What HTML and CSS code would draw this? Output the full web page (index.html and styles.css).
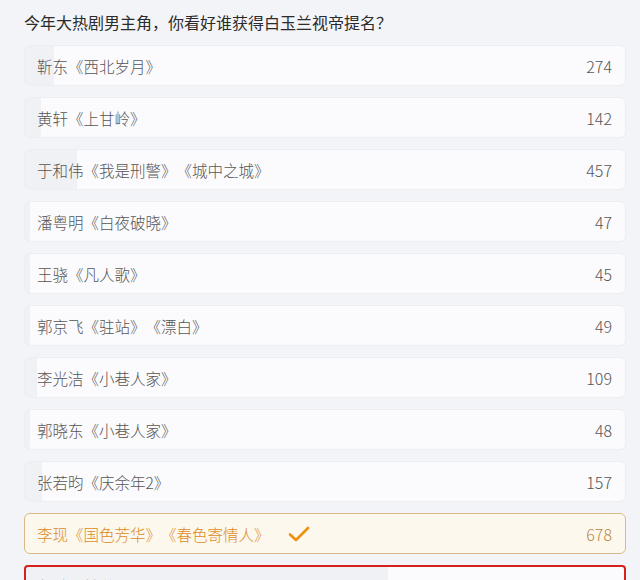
FILE: index.html
```html
<!DOCTYPE html>
<html lang="zh-CN">
<head>
  <meta charset="UTF-8" />
  <meta name="viewport" content="width=device-width, initial-scale=1.0" />
  <title>投票</title>
  <link rel="stylesheet" href="styles.css">
</head>
<body>
  <div class="poll">
    <h2 class="poll-title">今年大热剧男主角，你看好谁获得白玉兰视帝提名？</h2>
    <ul class="options">
      <li class="option" style="--pct: 4.8%"><span class="name">靳东《西北岁月》</span><span class="count">274</span></li>
      <li class="option" style="--pct: 2.7%"><span class="name">黄轩《上甘岭》</span><span class="count">142</span></li>
      <li class="option" style="--pct: 8.6%"><span class="name">于和伟《我是刑警》《城中之城》</span><span class="count">457</span></li>
      <li class="option" style="--pct: 0.9%"><span class="name">潘粤明《白夜破晓》</span><span class="count">47</span></li>
      <li class="option" style="--pct: 0.8%"><span class="name">王骁《凡人歌》</span><span class="count">45</span></li>
      <li class="option" style="--pct: 0.9%"><span class="name">郭京飞《驻站》《漂白》</span><span class="count">49</span></li>
      <li class="option" style="--pct: 2%"><span class="name">李光洁《小巷人家》</span><span class="count">109</span></li>
      <li class="option" style="--pct: 0.9%"><span class="name">郭晓东《小巷人家》</span><span class="count">48</span></li>
      <li class="option" style="--pct: 2.8%"><span class="name">张若昀《庆余年2》</span><span class="count">157</span></li>
      <li class="option voted" style="--pct: 0%">
        <span class="name">李现《国色芳华》《春色寄情人》
          <svg class="check" width="22" height="16" viewBox="0 0 22 16"><path d="M2 8.5 L8 14 L20 2" fill="none" stroke="#f0900f" stroke-width="2.6" stroke-linecap="round" stroke-linejoin="round"/></svg>
        </span>
        <span class="count">678</span>
      </li>
      <li class="option marked" style="--pct: 60.5%"><span class="name">胡歌《繁花》</span><span class="count">3286</span></li>
    </ul>
  </div>
</body>
</html>
```

FILE: styles.css
```css
body {
  margin: 0;
  background-color: #f3f4f8;
  font-family: "Noto Sans CJK SC", "Noto Sans", sans-serif;
  color: #333;
  text-spacing-trim: space-all;
}

.poll {
  padding: 10px 14px 0 24px;
}

.poll-title {
  margin: 0 0 11px;
  font-size: 16px;
  font-weight: 400;
  line-height: 24px;
  color: #2b2b2b;
}

.options {
  list-style: none;
  margin: 0;
  padding: 0;
  display: flex;
  flex-direction: column;
  gap: 11px;
}

.option {
  display: flex;
  align-items: center;
  justify-content: space-between;
  height: 41px;
  box-sizing: border-box;
  padding: 0 13px 0 12px;
  border: 1px solid #eceef3;
  border-radius: 6px;
  background: linear-gradient(to right, #f0f1f5 var(--pct), #fbfbfd var(--pct));
  font-size: 15.5px;
  font-weight: 300;
  color: #555;
}

.name {
  display: flex;
  align-items: center;
  white-space: nowrap;
}

.count {
  font-size: 16px;
  font-weight: 300;
  color: #555;
}

.option.voted {
  border-color: #d9b98a;
  background: #fdf8ee;
  color: #dc8a1e;
}

.option.voted .count {
  color: #b98a42;
}

.check {
  margin-left: 18px;
}

.option.marked {
  border: 2px solid #d6201c;
  border-radius: 4px;
  color: #999;
}

.option.marked .count {
  color: #999;
}
```
